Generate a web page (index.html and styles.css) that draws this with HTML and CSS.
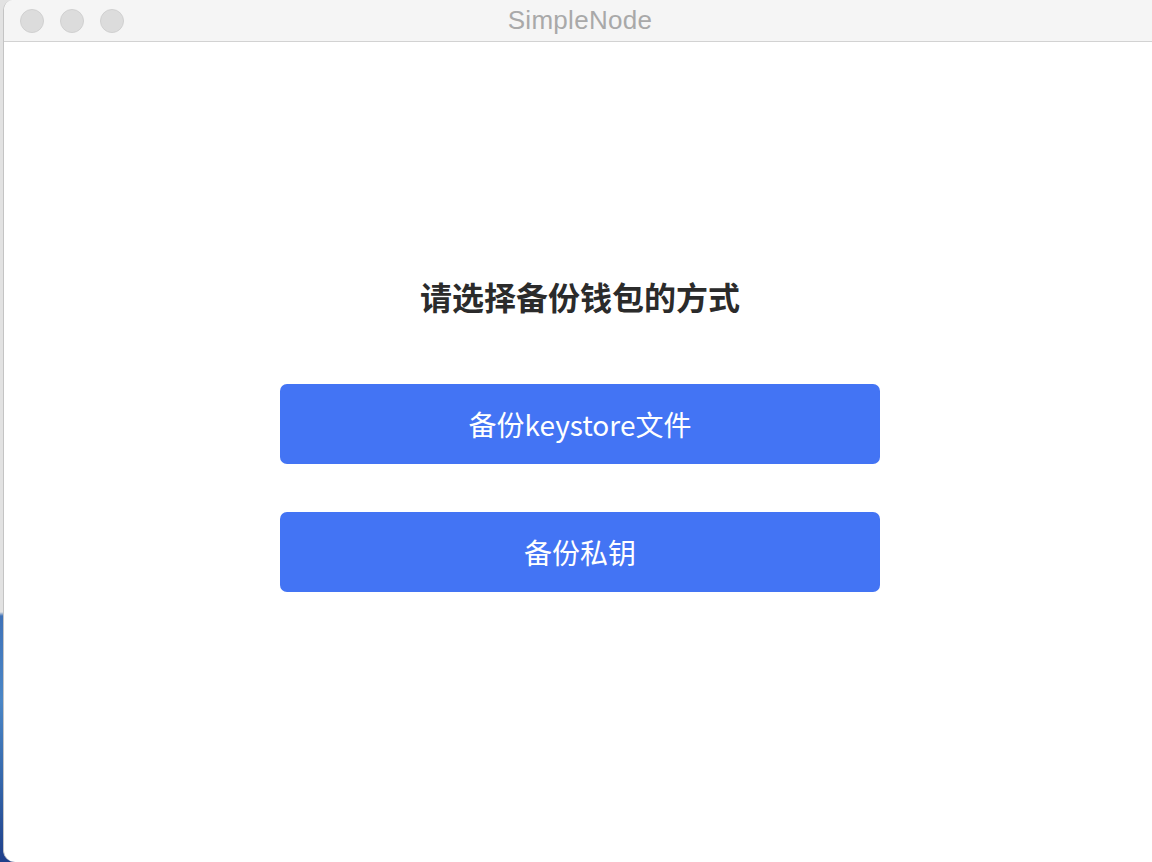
FILE: index.html
```html
<!DOCTYPE html>
<html lang="zh-CN">
<head>
<meta charset="utf-8">
<title>SimpleNode</title>
<link rel="stylesheet" href="styles.css">
</head>
<body>
<div class="desktop">
  <div class="window">
    <div class="titlebar">
      <div class="lights">
        <span class="light"></span>
        <span class="light"></span>
        <span class="light"></span>
      </div>
      <div class="title">SimpleNode</div>
    </div>
    <main class="content">
      <h1 class="heading">请选择备份钱包的方式</h1>
      <div class="actions">
        <button class="btn">备份keystore文件</button>
        <button class="btn">备份私钥</button>
      </div>
    </main>
  </div>
</div>
</body>
</html>
```
FILE: styles.css
```css
html, body {
  margin: 0;
  padding: 0;
  width: 1152px;
  height: 862px;
  overflow: hidden;
}
body {
  background: linear-gradient(to bottom, #e2e2e2 0, #e2e2e2 612px, #3f72b8 616px, #4a86c6 700px, #3567ab 780px, #1f3f8a 862px);
}
.desktop {
  display: flex;
  height: 862px;
  padding-left: 3px;
}
.window {
  width: 1152px;
  height: 862px;
  flex: none;
  background: #ffffff;
  border-left: 1px solid #c4c4c4;
  border-radius: 10px 0 0 12px;
  overflow: hidden;
  display: flex;
  flex-direction: column;
}
.titlebar {
  height: 41px;
  flex: none;
  background: #f5f5f5;
  border-bottom: 1px solid #d2d2d2;
  display: flex;
  align-items: center;
  position: relative;
}
.lights {
  display: flex;
  gap: 16px;
  padding-left: 16px;
}
.light {
  width: 22px;
  height: 22px;
  border-radius: 50%;
  background: #dcdcdc;
  border: 1px solid #d0d0d0;
}
.title {
  position: absolute;
  left: 0;
  right: 0;
  top: 0;
  line-height: 41px;
  text-align: center;
  font-family: "Liberation Sans", Arial, sans-serif;
  font-size: 26px;
  letter-spacing: 0.3px;
  color: #a9a9a9;
}
.content {
  flex: 1;
  display: flex;
  flex-direction: column;
  align-items: center;
  padding-top: 234px;
  font-family: "Noto Sans CJK SC", "Noto Sans", sans-serif;
}
.heading {
  margin: 0;
  font-size: 32px;
  line-height: 40px;
  font-weight: 700;
  color: #2b2b2b;
}
.actions {
  margin-top: 68px;
  display: flex;
  flex-direction: column;
  gap: 48px;
}
.btn {
  width: 600px;
  height: 80px;
  border: none;
  border-radius: 7px;
  background: #4374f4;
  color: #ffffff;
  font-family: "Noto Sans CJK SC", "Noto Sans", sans-serif;
  font-size: 28px;
  padding: 0;
  cursor: pointer;
}
```
